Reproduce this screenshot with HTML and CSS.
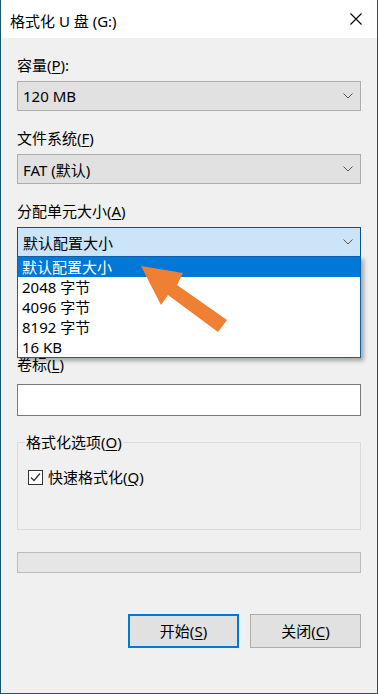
FILE: index.html
```html
<!DOCTYPE html>
<html lang="zh-CN">
<head>
    <meta charset="UTF-8">
    <meta name="viewport" content="width=device-width, initial-scale=1.0">
    <title>格式化 U 盘 (G:)</title>
    <link rel="stylesheet" href="styles.css">
</head>
<body>
    <div class="window">
        <div class="titlebar">
            <span class="title">格式化 U 盘 (G:)</span>
            <svg class="close" width="12" height="12" viewBox="0 0 12 12">
                <path d="M0.5 0.5 L11.5 11.5 M11.5 0.5 L0.5 11.5" stroke="#000" stroke-width="1.1" fill="none"/>
            </svg>
        </div>

        <div class="content">
            <div class="label">容量(<u>P</u>):</div>
            <div class="combo">
                <span>120 MB</span>
                <svg class="chevron" width="10" height="6" viewBox="0 0 10 6"><path d="M0.5 0.5 L5 5 L9.5 0.5" stroke="#555" fill="none"/></svg>
            </div>

            <div class="label">文件系统(<u>F</u>)</div>
            <div class="combo">
                <span>FAT (默认)</span>
                <svg class="chevron" width="10" height="6" viewBox="0 0 10 6"><path d="M0.5 0.5 L5 5 L9.5 0.5" stroke="#555" fill="none"/></svg>
            </div>

            <div class="label">分配单元大小(<u>A</u>)</div>
            <div class="combo focused">
                <span>默认配置大小</span>
                <svg class="chevron" width="10" height="6" viewBox="0 0 10 6"><path d="M0.5 0.5 L5 5 L9.5 0.5" stroke="#555" fill="none"/></svg>
            </div>

            <div class="label volume">卷标(<u>L</u>)</div>
            <div class="textbox"></div>

            <fieldset class="group">
                <legend>格式化选项(<u>O</u>)</legend>
                <div class="check-row">
                    <span class="checkbox">
                        <svg width="13" height="13" viewBox="0 0 13 13"><path d="M2 6.5 L5 9.5 L11 2.5" stroke="#333" stroke-width="1.2" fill="none"/></svg>
                    </span>
                    <span>快速格式化(<u>Q</u>)</span>
                </div>
            </fieldset>

            <div class="progress"></div>

            <div class="buttons">
                <div class="btn default">开始(<u>S</u>)</div>
                <div class="btn">关闭(<u>C</u>)</div>
            </div>
        </div>

        <!-- open dropdown of the allocation combo -->
        <div class="dropdown">
            <div class="item selected">默认配置大小</div>
            <div class="item">2048 字节</div>
            <div class="item">4096 字节</div>
            <div class="item">8192 字节</div>
            <div class="item">16 KB</div>
        </div>

        <svg class="arrow" width="378" height="694" viewBox="0 0 378 694">
            <polygon points="141,266 183,273 177,285 227,320 218,332 168,295 161,305" fill="#ee7f33"/>
        </svg>
    </div>
</body>
</html>
```

FILE: styles.css
```css
html, body {
    margin: 0;
    padding: 0;
    overflow: hidden;
}

body {
    font-family: "Noto Sans", "Noto Sans CJK SC", sans-serif;
    font-size: 15px;
    color: #000;
    background: #f0f0f0;
}

u {
    text-decoration: underline;
    text-underline-offset: 2px;
}

.window {
    position: relative;
    width: 378px;
    height: 694px;
    box-sizing: border-box;
    border: 1px solid #1b5870;
    border-top: none;
    background: #f0f0f0;
    display: flex;
    flex-direction: column;
}

.titlebar {
    height: 38px;
    flex-shrink: 0;
    background: #fff;
    display: flex;
    align-items: center;
    justify-content: space-between;
    padding: 0 15px 0 9px;
}

.title {
    line-height: 20px;
    margin-top: 3px;
}

.content {
    padding: 0 16px;
    display: flex;
    flex-direction: column;
}

.label {
    line-height: 20px;
    margin-top: 17px;
    white-space: nowrap;
}

.combo {
    height: 30px;
    margin-top: 6px;
    box-sizing: border-box;
    border: 1px solid #adadad;
    background: #e1e1e1;
    display: flex;
    align-items: center;
    justify-content: space-between;
    padding: 0 7px 0 5px;
}

.combo.focused {
    background: #cce4f7;
    border-color: #005499;
}

.chevron {
    display: block;
}

/* the "restore defaults" row is hidden by the open list, so just leave room */
.label.volume {
    margin-top: 97px;
}

.textbox {
    height: 32px;
    margin-top: 10px;
    box-sizing: border-box;
    border: 1px solid #7a7a7a;
    background: #fff;
}

.group {
    margin: 16px 0 0;
    padding: 15px 10px 42px;
    border: 1px solid #dcdcdc;
    min-width: 0;
}

.group legend {
    line-height: 20px;
    padding: 0 1px;
    margin-left: -3px;
}

.check-row {
    display: flex;
    align-items: center;
    gap: 5px;
    line-height: 20px;
}

.checkbox {
    width: 15px;
    height: 15px;
    box-sizing: border-box;
    border: 1px solid #333;
    background: #fff;
    display: flex;
    align-items: center;
    justify-content: center;
}

.checkbox svg {
    display: block;
}

.progress {
    height: 21px;
    margin-top: 22px;
    box-sizing: border-box;
    border: 1px solid #bcbcbc;
    background: #e6e6e6;
}

.buttons {
    margin-top: 41px;
    display: flex;
    justify-content: flex-end;
    gap: 11px;
}

.btn {
    width: 111px;
    height: 34px;
    box-sizing: border-box;
    border: 1px solid #adadad;
    background: #e1e1e1;
    display: flex;
    align-items: center;
    justify-content: center;
    line-height: 20px;
}

.btn.default {
    border: 2px solid #0078d7;
}

/* the open list lies over the form */
.dropdown {
    position: absolute;
    left: 16px;
    top: 256px;
    width: 344px;
    box-sizing: border-box;
    border: 1px solid #1060a8;
    background: #fff;
    box-shadow: 3px 3px 4px rgba(0, 0, 0, 0.3);
}

.item {
    height: 20px;
    line-height: 20px;
    padding-left: 4px;
}

.item.selected {
    background: #0078d7;
    color: #fff;
}

.arrow {
    position: absolute;
    left: -1px;
    top: 0;
    pointer-events: none;
}
```
